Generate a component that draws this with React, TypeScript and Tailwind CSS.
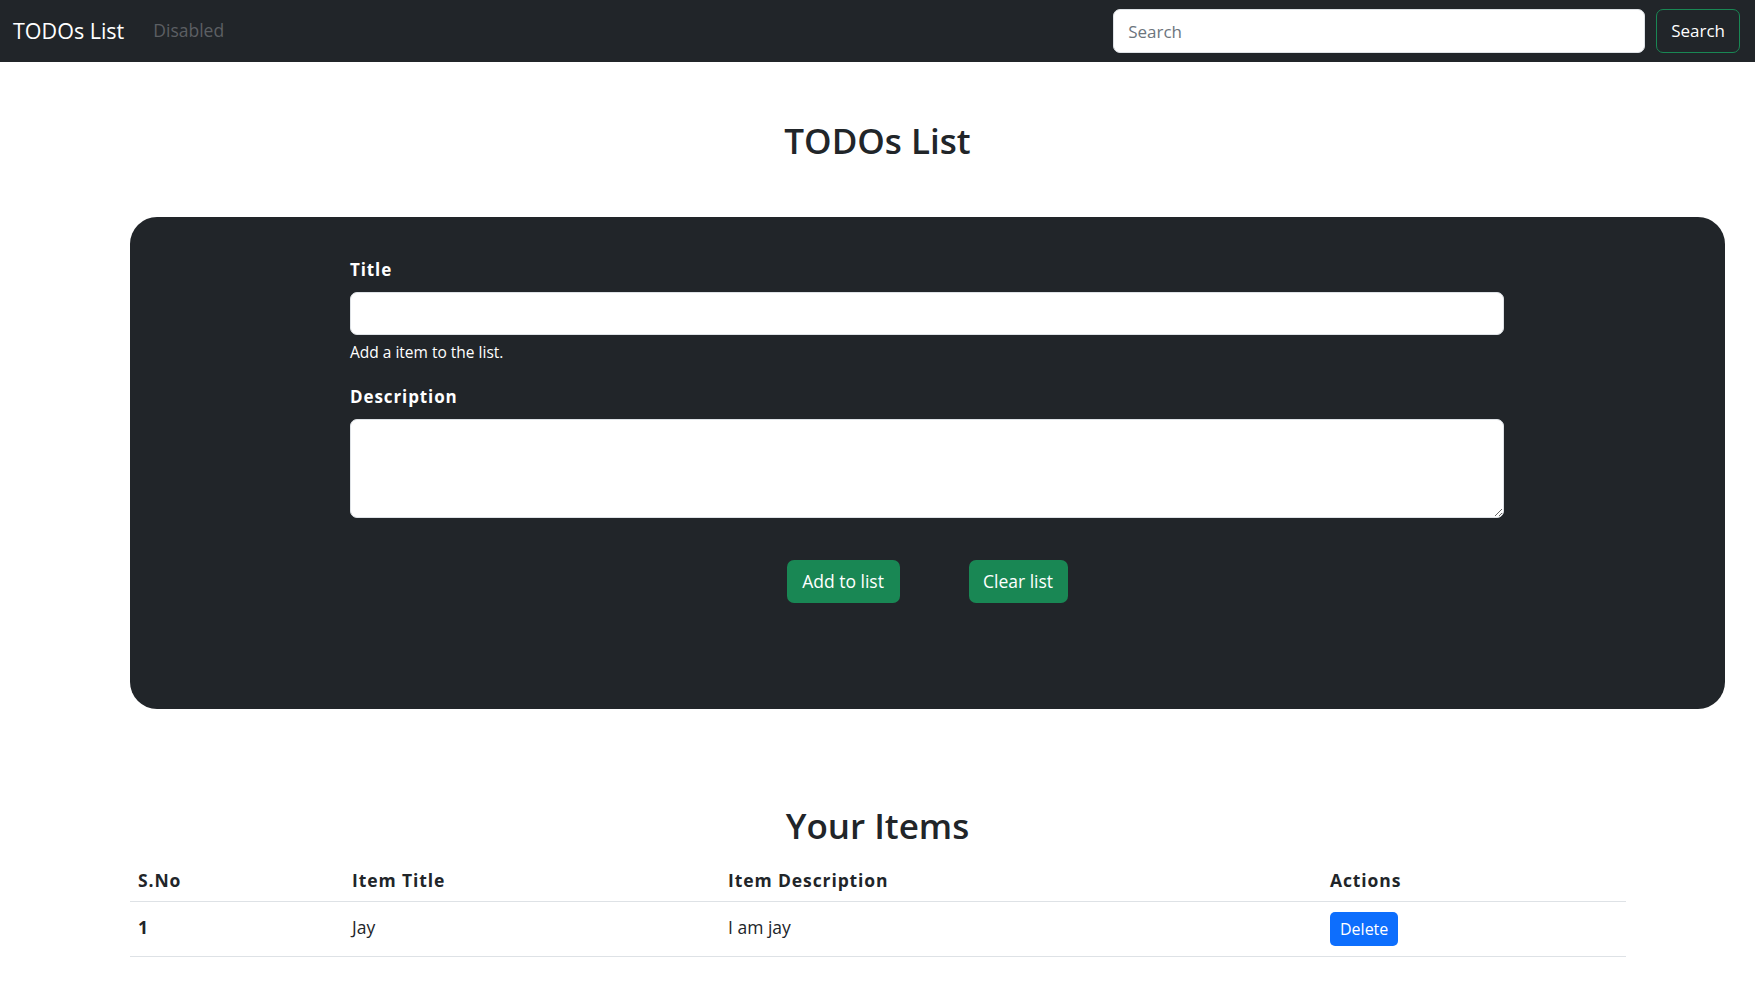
import React, { useState } from 'react';

type Todo = {
    sno: number;
    title: string;
    desc: string;
};

const font = { fontFamily: '"Open Sans", "Noto Sans", Arial, sans-serif' };

const App: React.FC = () => {
    const [todos, setTodos] = useState<Todo[]>([{ sno: 1, title: 'Jay', desc: 'I am jay' }]);
    const [title, setTitle] = useState<string>('');
    const [desc, setDesc] = useState<string>('');

    const addTodo = (e: React.FormEvent) => {
        e.preventDefault();
        if (!title && !desc) return;
        setTodos([...todos, { sno: todos.length + 1, title, desc }]);
        setTitle('');
        setDesc('');
    };

    const deleteTodo = (sno: number) => {
        setTodos(todos.filter((t) => t.sno !== sno).map((t, i) => ({ ...t, sno: i + 1 })));
    };

    return (
        <div className="min-h-screen bg-white text-[#212529]" style={font}>
            {/* Navbar */}
            <nav className="h-[62px] bg-[#212529] flex items-center pl-[13px] pr-[15px]">
                <a href="#" className="text-white text-[21.5px] leading-none mr-[29px]">TODOs List</a>
                <span className="text-[#5c5f63] text-[17.5px] leading-none">Disabled</span>
                <form className="ml-auto flex items-center gap-[11px]" onSubmit={(e) => e.preventDefault()}>
                    <input
                        type="search"
                        placeholder="Search"
                        className="w-[532px] h-[44px] rounded-[7px] bg-white px-[14px] text-[17px] text-[#212529] placeholder:text-[#6c757d] outline-none border border-[#dee2e6]"
                    />
                    <button className="h-[44px] px-[14px] rounded-[7px] border border-[#198754] text-white text-[17px]">
                        Search
                    </button>
                </form>
            </nav>

            {/* Heading */}
            <h2 className="text-center text-[35px] font-semibold leading-[47px] mt-[55px]">TODOs List</h2>

            {/* Form card */}
            <div className="ml-[130px] mr-[30px] mt-[53px] bg-[#212529] rounded-[27px] pt-[39px] pb-[106px] pl-[220px] pr-[221px]">
                <form onSubmit={addTodo}>
                    <label htmlFor="title" className="block text-white font-bold text-[17px] tracking-[0.9px] leading-[28px] mb-[8px]">Title</label>
                    <input
                        id="title"
                        type="text"
                        value={title}
                        onChange={(e) => setTitle(e.target.value)}
                        className="block w-full h-[43px] rounded-[7px] bg-white border border-[#dee2e6] px-[14px] text-[17px] outline-none"
                    />
                    <div className="text-white text-[15.5px] leading-[25px] mt-[5px]">Add a item to the list.</div>

                    <label htmlFor="desc" className="block text-white font-bold text-[17px] tracking-[0.9px] leading-[28px] mt-[18px] mb-[8px]">Description</label>
                    <textarea
                        id="desc"
                        value={desc}
                        onChange={(e) => setDesc(e.target.value)}
                        className="block w-full h-[99px] rounded-[7px] bg-white border border-[#dee2e6] px-[14px] py-[7px] text-[17px] outline-none"
                    />

                    <div className="flex justify-center gap-[69px] mt-[42px]">
                        <button type="submit" className="h-[43px] w-[113px] rounded-[7px] bg-[#198754] text-white text-[17.5px]">Add to list</button>
                        <button type="button" onClick={() => setTodos([])} className="h-[43px] w-[99px] rounded-[7px] bg-[#198754] text-white text-[17.5px]">Clear list</button>
                    </div>
                </form>
            </div>

            {/* Items */}
            <h2 className="text-center text-[35px] font-semibold leading-[47px] mt-[93px]">Your Items</h2>
            <table className="ml-[130px] w-[1496px] mt-[10px] text-[17.5px] border-collapse">
                <thead>
                    <tr className="border-b border-[#dee2e6] text-left">
                        <th className="w-[214px] px-[8px] py-[8px] font-bold tracking-[0.9px]">S.No</th>
                        <th className="w-[376px] px-[8px] py-[8px] font-bold tracking-[0.9px]">Item Title</th>
                        <th className="w-[602px] px-[8px] py-[8px] font-bold tracking-[0.9px]">Item Description</th>
                        <th className="px-[8px] py-[8px] font-bold tracking-[0.9px]">Actions</th>
                    </tr>
                </thead>
                <tbody>
                    {todos.map((todo) => (
                        <tr key={todo.sno} className="border-b border-[#dee2e6]">
                            <th className="px-[8px] pt-[8px] pb-[12px] text-left font-bold">{todo.sno}</th>
                            <td className="px-[8px] pt-[8px] pb-[12px]">{todo.title}</td>
                            <td className="px-[8px] pt-[8px] pb-[12px]">{todo.desc}</td>
                            <td className="px-[8px] pt-[10px] pb-[10px]">
                                <button
                                    onClick={() => deleteTodo(todo.sno)}
                                    className="h-[34px] px-[10px] rounded-[5px] bg-[#0d6efd] text-white text-[16px]"
                                >
                                    Delete
                                </button>
                            </td>
                        </tr>
                    ))}
                </tbody>
            </table>
        </div>
    );
};

export default App;
